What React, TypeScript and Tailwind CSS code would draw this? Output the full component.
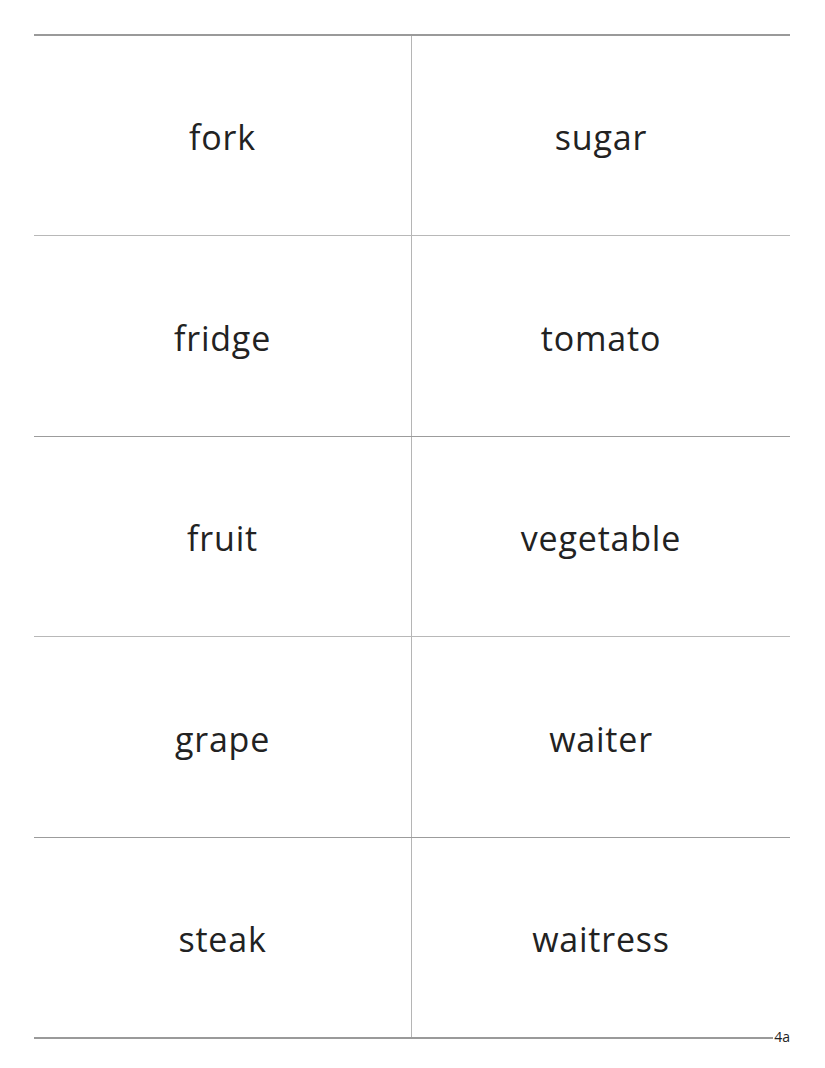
import React from "react";

const words: [string, string][] = [
  ["fork", "sugar"],
  ["fridge", "tomato"],
  ["fruit", "vegetable"],
  ["grape", "waiter"],
  ["steak", "waitress"],
];

const rowClasses = [
  "h-[200px] border-b border-[#b8b8b8]",
  "h-[201px] border-b border-[#9c9c9c]",
  "h-[200px] border-b border-[#b8b8b8]",
  "h-[201px] border-b border-[#9c9c9c]",
  "h-[199px]",
];

export default function App() {
  return (
    <div
      className="w-[825px] h-[1068px] bg-white pt-[34px] pl-[34px]"
      style={{ fontFamily: "'Open Sans', Lato, sans-serif" }}
    >
      <div className="relative w-[756px] border-t-2 border-b-2 border-[#9a9a9a]">
        {words.map((row, i) => (
          <div key={i} className={`grid grid-cols-[378px_378px] ${rowClasses[i]}`}>
            <div className="flex items-center justify-center border-r border-[#b5b5b5] text-[34px] tracking-[0.8px] text-[#222] pt-[4px]">
              {row[0]}
            </div>
            <div className="flex items-center justify-center text-[34px] tracking-[0.8px] text-[#222] pt-[4px]">
              {row[1]}
            </div>
          </div>
        ))}
        <div className="absolute right-0 bottom-[-8px] bg-white pl-[1px] text-[14px] leading-[16px] text-[#222]">
          4a
        </div>
      </div>
    </div>
  );
}
